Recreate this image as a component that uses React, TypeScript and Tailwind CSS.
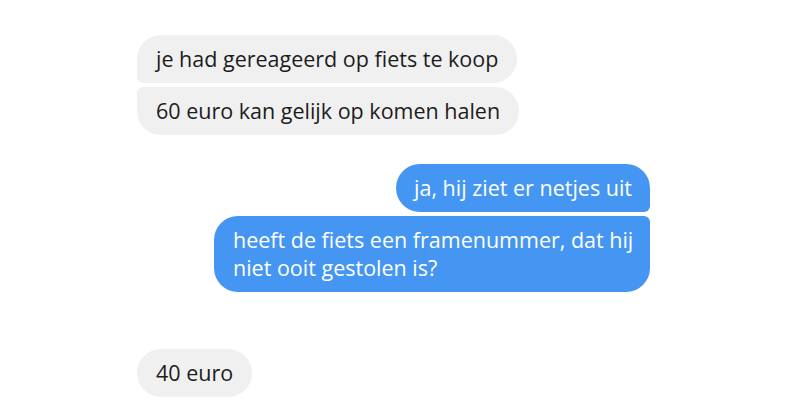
const received = 'rounded-[24px] bg-[#f0f0f0] text-[#1c1c1c]';
const sent = 'rounded-[24px] bg-[#4596f3] text-white';

export default function App() {
  return (
    <div
      className="h-[420px] w-[800px] overflow-hidden bg-white pl-[137px] pr-[150px] pt-[35px]"
      style={{ fontFamily: '"Open Sans", "Noto Sans", sans-serif' }}
    >
      <div className="flex flex-col items-start gap-[4px]">
        <div className={`${received} rounded-bl-[6px] px-[19px] py-[10px] text-[21.5px] leading-[28px]`}>
          je had gereageerd op fiets te koop
        </div>
        <div className={`${received} rounded-tl-[6px] px-[19px] py-[10px] text-[21.5px] leading-[28px]`}>
          60 euro kan gelijk op komen halen
        </div>
      </div>

      <div className="mt-[29px] flex flex-col items-end gap-[4px]">
        <div className={`${sent} rounded-br-[6px] px-[18px] py-[10px] text-[21.5px] leading-[28px]`}>
          ja, hij ziet er netjes uit
        </div>
        <div className={`${sent} w-[436px] whitespace-nowrap rounded-tr-[6px] px-[19px] py-[10px] text-[21.5px] leading-[28px]`}>
          heeft de fiets een framenummer, dat hij
          <br />
          niet ooit gestolen is?
        </div>
      </div>

      <div className="mt-[57px] flex flex-col items-start">
        <div className={`${received} px-[19px] py-[10px] text-[21.5px] leading-[28px]`}>
          40 euro
        </div>
      </div>
    </div>
  );
}
